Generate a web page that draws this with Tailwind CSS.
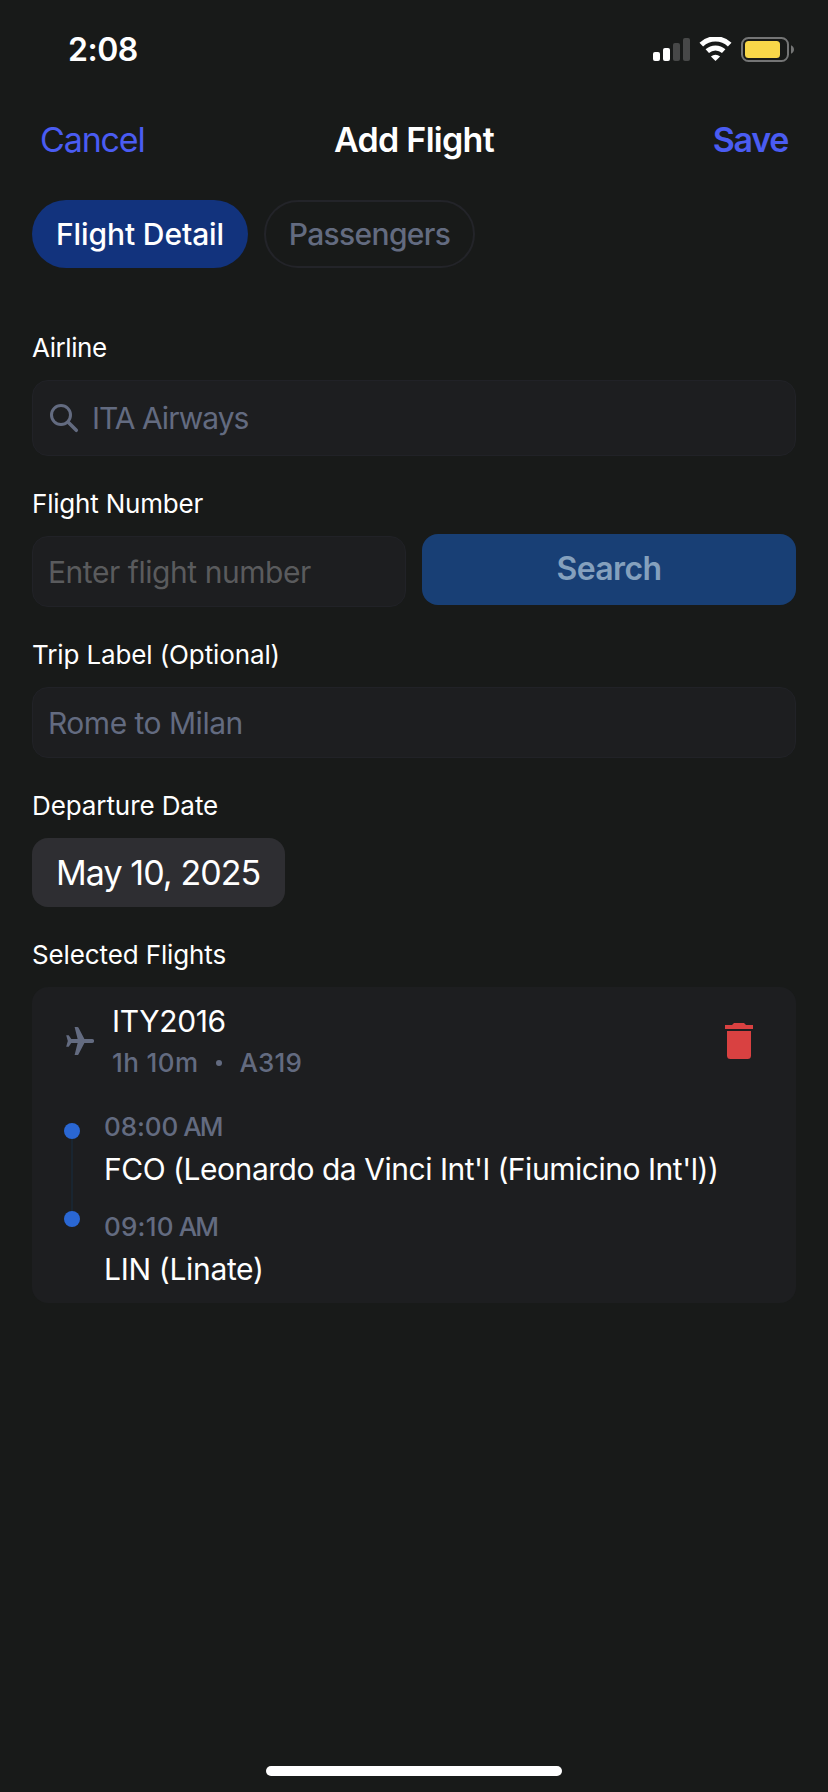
<!DOCTYPE html>
<html lang="en">
<head>
<meta charset="utf-8">
<title>Add Flight</title>
<script src="https://cdn.jsdelivr.net/npm/@tailwindcss/browser@4"></script>
</head>
<body class="bg-[#181a19]">
<div class="flex h-[1792px] w-[828px] flex-col bg-[#181a19] font-['Inter',sans-serif] whitespace-nowrap text-white">

  <!-- Status bar -->
  <div class="flex h-[99px] items-center justify-between pr-[33px] pl-[68px]">
    <span class="text-[32px] font-semibold tracking-[-0.5px]">2:08</span>
    <svg class="h-[25px] w-[142px]" viewBox="653 37 142 25" fill="none">
      <rect x="653" y="52" width="7" height="9" rx="2" fill="#fff"/>
      <rect x="663" y="48" width="7" height="13" rx="2" fill="#fff"/>
      <rect x="673" y="43" width="7" height="18" rx="2" fill="#474848"/>
      <rect x="683" y="38" width="7" height="23" rx="2" fill="#474848"/>
      <path d="M701.300 44.600a20.500 20.500 0 0 1 28.400 0" stroke="#fff" stroke-width="5.200"/>
      <path d="M707.300 51.200a12 12 0 0 1 16.400 0" stroke="#fff" stroke-width="5"/>
      <path d="M715.5 61l-4.6-4.500a6.900 6.900 0 0 1 9.200 0z" fill="#fff"/>
      <rect x="742" y="38" width="46" height="23" rx="6.5" stroke="#747575" stroke-width="2"/>
      <rect x="745" y="41" width="35" height="17" rx="3.5" fill="#f8d749"/>
      <path d="M791 45.2c1.800.7 3 2.400 3 4.300s-1.200 3.600-3 4.300z" fill="#747575"/>
    </svg>
  </div>

  <!-- Navigation bar -->
  <div class="grid h-[80px] grid-cols-3 items-center pr-10 pl-10 text-[34px]">
    <span class="tracking-[-1.15px] text-[#4a5cf2]">Cancel</span>
    <span class="text-center font-semibold tracking-[-0.7px]">Add Flight</span>
    <span class="text-right font-semibold tracking-[-1.3px] text-[#4a5cf2]">Save</span>
  </div>

  <!-- Tabs -->
  <div class="mt-[21px] flex h-[68px] gap-4 px-8 text-[30px] font-medium">
    <div class="flex w-[216px] items-center justify-center rounded-[34px] bg-[#12337d] tracking-[-0.11px]">Flight Detail</div>
    <div class="flex w-[211px] items-center justify-center rounded-[34px] border-2 border-[#232429] tracking-[-0.66px] text-[#636b80]">Passengers</div>
  </div>

  <!-- Form -->
  <div class="mt-16 flex flex-col gap-8 px-8">
    <div>
      <div class="mb-4 h-8 text-[26px] leading-8 tracking-[-0.42px]">Airline</div>
      <div class="flex h-[76px] items-center rounded-2xl border border-[#212227] bg-[#1d1e20] pl-4">
        <svg class="h-[30px] w-[30px]" viewBox="0 0 30 30" fill="none" stroke="#636b80" stroke-linecap="round">
          <circle cx="12" cy="12" r="9.5" stroke-width="3"/>
          <path d="M19 19l8.300 8.300" stroke-width="3.500"/>
        </svg>
        <span class="ml-[13px] text-[30px] tracking-[-1px] text-[#636b80]">ITA Airways</span>
      </div>
    </div>

    <div>
      <div class="mb-4 h-8 text-[26px] leading-8 tracking-[-0.2px]">Flight Number</div>
      <div class="grid h-[71px] grid-cols-2 gap-4">
        <div class="flex items-center rounded-2xl border border-[#212227] bg-[#1d1e20] pt-0.5 pl-[15px] text-[30px] tracking-[-0.45px] text-[#5a5b5d]">Enter flight number</div>
        <div class="-mt-0.5 mb-0.5 flex items-center justify-center rounded-2xl bg-[#183f75] pb-0.5 text-[32px] font-semibold tracking-[-0.61px] text-[#84a0bd]">Search</div>
      </div>
    </div>

    <div>
      <div class="mb-4 h-8 text-[26px] leading-8 tracking-[-0.12px]">Trip Label (Optional)</div>
      <div class="flex h-[71px] items-center rounded-2xl border border-[#212227] bg-[#1d1e20] pt-0.5 pl-[15px] text-[30px] tracking-[-0.5px] text-[#636b80]">Rome to Milan</div>
    </div>

    <div>
      <div class="mb-4 h-8 text-[26px] leading-8 tracking-[-0.09px]">Departure Date</div>
      <div class="flex h-[69px] w-[253px] items-center rounded-2xl bg-[#2e2e32] pb-px pl-6 text-[34px] tracking-[-0.92px]">May 10, 2025</div>
    </div>

    <div>
      <div class="mb-4 h-8 text-[26px] leading-8 tracking-[-0.12px]">Selected Flights</div>
      <div class="h-[316px] rounded-2xl bg-[#1d1e20] pt-[13px] pr-[43px] pl-8">
        <div class="flex items-center">
          <svg class="mb-0.5 ml-0.5 h-7 w-7" viewBox="0 0 28 28" fill="#636b80">
            <path d="M8.600 0h2.800q.7 0 1 .6L18.400 11.900H26a2.100 2.100 0 0 1 0 4.200h-7.600L12.400 27.400q-.3.600-1 .600H8.600l3-11.900H5.300L2.700 19.700H.200L1.800 14 .200 8.300h2.500L5.300 11.900h6.300z"/>
          </svg>
          <div class="ml-[18px]">
            <div class="h-[42px] text-[30px] leading-[42px] tracking-[-0.38px]">ITY2016</div>
            <div class="flex h-[41px] items-center text-[26px] font-medium text-[#636b80]">
              <span class="tracking-[0.41px]">1h 10m</span>
              <span class="ml-[17px] size-1.5 rounded-full bg-[#636b80]"></span>
              <span class="ml-[18px] tracking-[0.16px]">A319</span>
            </div>
          </div>
          <svg class="mb-0.5 ml-auto h-9 w-7" viewBox="0 0 28 36" fill="#d94141">
            <path d="M0 2h7l2-2h10l2 2h7v4H0zM2 8h24v24.500a3.500 3.500 0 0 1-3.500 3.500h-17A3.500 3.500 0 0 1 2 32.500z"/>
          </svg>
        </div>

        <div class="mt-[25px] flex">
          <div class="flex w-4 flex-col items-center pt-[15px]">
            <span class="size-4 rounded-full bg-[#2a67d3]"></span>
            <span class="h-[72px] w-0.5 bg-[#192530]"></span>
            <span class="size-4 rounded-full bg-[#2a67d3]"></span>
          </div>
          <div class="ml-6 flex flex-col gap-[15px]">
            <div>
              <div class="flex h-[37px] gap-[5px] text-[26px] leading-[37px] font-medium text-[#636b80]"><span class="tracking-[-0.08px]">08:00</span><span class="tracking-[-1.8px]">AM</span></div>
              <div class="h-12 text-[30px] leading-[48px] tracking-[-0.47px]">FCO (Leonardo da Vinci Int'l (Fiumicino Int'l))</div>
            </div>
            <div>
              <div class="flex h-[37px] gap-[5px] text-[26px] leading-[37px] font-medium text-[#636b80]"><span class="tracking-[0.2px]">09:10</span><span class="tracking-[-1.8px]">AM</span></div>
              <div class="h-12 text-[30px] leading-[48px] tracking-[-0.32px]">LIN (Linate)</div>
            </div>
          </div>
        </div>
      </div>
    </div>
  </div>

  <!-- Home indicator -->
  <div class="mx-auto mt-auto mb-4 h-2.5 w-[296px] rounded-full bg-white"></div>
</div>
</body>
</html>
